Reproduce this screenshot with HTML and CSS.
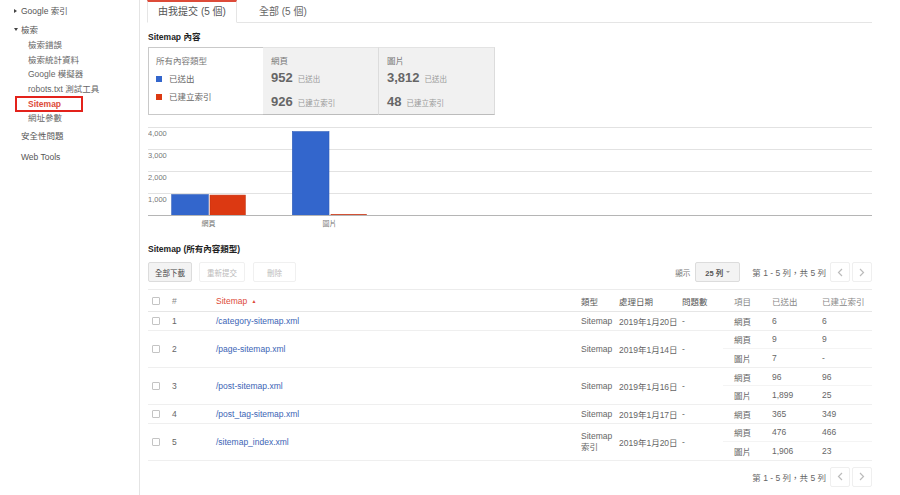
FILE: index.html
```html
<!DOCTYPE html>
<html lang="zh-Hant">
<head>
<meta charset="utf-8">
<title>Sitemap</title>
<link rel="stylesheet" href="styles.css">
</head>
<body>
<div class="page">
  <nav class="sidebar">
    <div class="nav-item nav-top"><span class="tri tri-right"></span>Google 索引</div>
    <div class="nav-item nav-top nav-open"><span class="tri tri-down"></span>檢索</div>
    <div class="nav-sub">檢索錯誤</div>
    <div class="nav-sub">檢索統計資料</div>
    <div class="nav-sub">Google 模擬器</div>
    <div class="nav-sub">robots.txt 測試工具</div>
    <div class="nav-sub nav-active">Sitemap</div>
    <div class="nav-sub">網址參數</div>
    <div class="nav-item nav-plain nav-sec">安全性問題</div>
    <div class="nav-item nav-plain nav-web">Web Tools</div>
  </nav>

  <main class="main">
    <div class="tabs">
      <div class="tab tab-active">由我提交 (5 個)</div>
      <div class="tab">全部 (5 個)</div>
    </div>

    <div class="section-title title-content">Sitemap 內容</div>

    <div class="type-boxes">
      <div class="type-box type-box-all">
        <div class="box-label">所有內容類型</div>
        <div class="legend"><span class="swatch swatch-blue"></span>已送出</div>
        <div class="legend"><span class="swatch swatch-red"></span>已建立索引</div>
      </div>
      <div class="type-box type-box-gray">
        <div class="box-label">網頁</div>
        <div class="stat stat-first"><span class="stat-num">952</span><span class="stat-label">已送出</span></div>
        <div class="stat"><span class="stat-num">926</span><span class="stat-label">已建立索引</span></div>
      </div>
      <div class="type-box type-box-gray">
        <div class="box-label">圖片</div>
        <div class="stat stat-first"><span class="stat-num">3,812</span><span class="stat-label">已送出</span></div>
        <div class="stat"><span class="stat-num">48</span><span class="stat-label">已建立索引</span></div>
      </div>
    </div>

    <svg class="chart" width="724" height="110" viewBox="0 0 724 110">
      <g class="grid">
        <line x1="0" y1="7.5" x2="724" y2="7.5"/>
        <line x1="0" y1="29.5" x2="724" y2="29.5"/>
        <line x1="0" y1="51.5" x2="724" y2="51.5"/>
        <line x1="0" y1="73.5" x2="724" y2="73.5"/>
      </g>
      <g class="axis-labels">
        <text x="0" y="15.5">4,000</text>
        <text x="0" y="37.5">3,000</text>
        <text x="0" y="59.5">2,000</text>
        <text x="0" y="81.5">1,000</text>
      </g>
      <rect class="bar-blue" x="23.7" y="74.6" width="36.6" height="20.9"/>
      <rect class="bar-red" x="62" y="75.1" width="35.3" height="20.4"/>
      <rect class="bar-blue" x="144.3" y="11.6" width="36.7" height="83.9"/>
      <rect class="bar-red" x="183" y="94.4" width="35.3" height="1.1"/>
      <line class="baseline" x1="0" y1="95.5" x2="724" y2="95.5"/>
      <g class="cat-labels">
        <text x="60.5" y="106">網頁</text>
        <text x="181.5" y="106">圖片</text>
      </g>
    </svg>

    <div class="section-title title-list">Sitemap (所有內容類型)</div>

    <div class="toolbar">
      <button class="btn">全部下載</button>
      <button class="btn btn-disabled btn-resubmit">重新提交</button>
      <button class="btn btn-disabled btn-delete">刪除</button>
      <div class="spacer"></div>
      <span class="show-label">顯示</span>
      <button class="btn btn-select">25 列 <span class="caret"></span></button>
      <span class="pager-text">第 1 - 5 列，共 5 列</span>
      <button class="arrow arrow-prev"><svg width="6" height="9" viewBox="0 0 6 9"><path d="M5 1L1.5 4.5L5 8" fill="none" stroke="#bbb" stroke-width="1.2"/></svg></button>
      <button class="arrow"><svg width="6" height="9" viewBox="0 0 6 9"><path d="M1 1L4.5 4.5L1 8" fill="none" stroke="#bbb" stroke-width="1.2"/></svg></button>
    </div>

    <div class="sitemaps" role="table">
      <div class="trow thead" role="row">
        <div class="cell cb-cell"><span class="checkbox"></span></div>
        <div class="cell">#</div>
        <div class="cell sorted">Sitemap <span class="sort-arrow">▲</span></div>
        <div class="cell dark">類型</div>
        <div class="cell dark">處理日期</div>
        <div class="cell dark">問題數</div>
        <div class="cell item-head">項目</div>
        <div class="cell">已送出</div>
        <div class="cell">已建立索引</div>
      </div>

      <div class="trow" role="row">
        <div class="cell cb-cell"><span class="checkbox"></span></div>
        <div class="cell">1</div>
        <div class="cell"><a class="link">/category-sitemap.xml</a></div>
        <div class="cell">Sitemap</div>
        <div class="cell">2019年1月20日</div>
        <div class="cell">-</div>
        <div class="items">
          <div class="sub"><span class="sub-item">網頁</span><span>6</span><span>6</span></div>
        </div>
      </div>

      <div class="trow" role="row">
        <div class="cell cb-cell"><span class="checkbox"></span></div>
        <div class="cell">2</div>
        <div class="cell"><a class="link">/page-sitemap.xml</a></div>
        <div class="cell">Sitemap</div>
        <div class="cell">2019年1月14日</div>
        <div class="cell">-</div>
        <div class="items">
          <div class="sub"><span class="sub-item">網頁</span><span>9</span><span>9</span></div>
          <div class="sub"><span class="sub-item">圖片</span><span>7</span><span>-</span></div>
        </div>
      </div>

      <div class="trow" role="row">
        <div class="cell cb-cell"><span class="checkbox"></span></div>
        <div class="cell">3</div>
        <div class="cell"><a class="link">/post-sitemap.xml</a></div>
        <div class="cell">Sitemap</div>
        <div class="cell">2019年1月16日</div>
        <div class="cell">-</div>
        <div class="items">
          <div class="sub"><span class="sub-item">網頁</span><span>96</span><span>96</span></div>
          <div class="sub"><span class="sub-item">圖片</span><span>1,899</span><span>25</span></div>
        </div>
      </div>

      <div class="trow" role="row">
        <div class="cell cb-cell"><span class="checkbox"></span></div>
        <div class="cell">4</div>
        <div class="cell"><a class="link">/post_tag-sitemap.xml</a></div>
        <div class="cell">Sitemap</div>
        <div class="cell">2019年1月17日</div>
        <div class="cell">-</div>
        <div class="items">
          <div class="sub"><span class="sub-item">網頁</span><span>365</span><span>349</span></div>
        </div>
      </div>

      <div class="trow" role="row">
        <div class="cell cb-cell"><span class="checkbox"></span></div>
        <div class="cell">5</div>
        <div class="cell"><a class="link">/sitemap_index.xml</a></div>
        <div class="cell two-line">Sitemap<br>索引</div>
        <div class="cell">2019年1月20日</div>
        <div class="cell">-</div>
        <div class="items">
          <div class="sub"><span class="sub-item">網頁</span><span>476</span><span>466</span></div>
          <div class="sub"><span class="sub-item">圖片</span><span>1,906</span><span>23</span></div>
        </div>
      </div>
    </div>

    <div class="footer-pager">
      <span class="pager-text">第 1 - 5 列，共 5 列</span>
      <button class="arrow arrow-prev"><svg width="6" height="9" viewBox="0 0 6 9"><path d="M5 1L1.5 4.5L5 8" fill="none" stroke="#bbb" stroke-width="1.2"/></svg></button>
      <button class="arrow"><svg width="6" height="9" viewBox="0 0 6 9"><path d="M1 1L4.5 4.5L1 8" fill="none" stroke="#bbb" stroke-width="1.2"/></svg></button>
    </div>
  </main>
</div>
</body>
</html>
```

FILE: styles.css
```css
* { box-sizing: border-box; }

body {
  margin: 0;
  background: #fff;
  color: #555;
  font-family: "Liberation Sans", "Noto Sans CJK TC", sans-serif;
  font-size: 8.5px;
}

.page {
  display: flex;
  width: 900px;
  height: 495px;
  overflow: hidden;
}

/* ---------- sidebar ---------- */
.sidebar {
  width: 140px;
  flex-shrink: 0;
  border-right: 1px solid #e4e4e4;
  padding-top: 4px;
}

.nav-item {
  line-height: 15px;
  color: #555;
  white-space: nowrap;
}

.nav-top {
  padding-left: 14px;
}

.nav-open {
  margin-top: 4px;
}

.tri {
  display: inline-block;
  vertical-align: middle;
  margin-right: 4px;
  position: relative;
  top: -1px;
}

.tri-right {
  border-left: 3px solid #444;
  border-top: 2.5px solid transparent;
  border-bottom: 2.5px solid transparent;
}

.tri-down {
  border-top: 3px solid #444;
  border-left: 2.5px solid transparent;
  border-right: 2.5px solid transparent;
  margin-right: 3px;
}

.nav-sub {
  line-height: 14.6px;
  padding-left: 28px;
  color: #666;
  white-space: nowrap;
}

.nav-active {
  margin-left: 15px;
  padding-left: 11px;
  width: 68px;
  height: 16px;
  line-height: 12px;
  border: 2px solid #e3221b;
  color: #dd4b39;
  font-weight: bold;
  margin-top: -0.5px;
  margin-bottom: -1px;
}

.nav-plain {
  padding-left: 21px;
}

.nav-sec {
  margin-top: 4px;
}

.nav-web {
  margin-top: 6px;
}

/* ---------- main ---------- */
.main {
  flex: 1;
  padding: 0 28px 0 7px;
  min-width: 0;
}

.tabs {
  display: flex;
  height: 23px;
  border-bottom: 1px solid #e5e5e5;
}

.tab {
  font-size: 10px;
  line-height: 20px;
  color: #666;
  padding: 0 0 0 22px;
  margin-top: 2px;
}

.tab-active {
  width: 90px;
  height: 23px;
  margin-top: 0;
  padding: 0;
  text-align: center;
  color: #555;
  background: #fff;
  border: 1px solid #e5e5e5;
  border-top: 2px solid #dd4b39;
  border-bottom: 1px solid #fff;
}

.section-title {
  font-weight: bold;
  color: #222;
  line-height: 10px;
  padding-left: 1px;
}

.title-content {
  margin-top: 9px;
}

.title-list {
  margin-top: 14px;
}

/* ---------- content type boxes ---------- */
.type-boxes {
  display: flex;
  margin-top: 5px;
  margin-left: 1px;
  height: 68px;
}

.type-box {
  width: 116px;
  height: 68px;
  padding: 8px 7px 0 7px;
}

.type-box-all {
  width: 115px;
  background: #fff;
  border: 1px solid #c9c9c9;
  border-right: none;
}

.type-box-gray {
  background: #f1f1f1;
  border-top: 1px solid #e3e3e3;
  border-right: 1px solid #dcdcdc;
  border-bottom: 1px solid #bcbcbc;
  padding-left: 8px;
}

.box-label {
  line-height: 10px;
  color: #777;
}

.legend {
  margin-top: 8px;
  line-height: 10px;
  color: #666;
  display: flex;
  align-items: center;
}

.swatch {
  width: 6px;
  height: 6px;
  margin-right: 7px;
}

.swatch-blue { background: #3366cc; }
.swatch-red { background: #dc3912; }

.stat {
  margin-top: 6px;
  line-height: 16px;
  white-space: nowrap;
}

.stat-first {
  margin-top: 4px;
}

.stat-num {
  font-size: 13px;
  font-weight: bold;
  color: #666;
  margin-right: 5px;
}

.stat-label {
  font-size: 7.5px;
  color: #999;
}

/* ---------- chart ---------- */
.chart {
  display: block;
  margin-top: 5px;
  margin-left: 1px;
}

.grid line {
  stroke: #e2e2e2;
  stroke-width: 1;
}

.baseline {
  stroke: #b5b5b5;
  stroke-width: 1;
}

.axis-labels text {
  font-family: "Liberation Sans", sans-serif;
  font-size: 7.5px;
  fill: #777;
}

.cat-labels text {
  font-family: "Liberation Sans", "Noto Sans CJK TC", sans-serif;
  font-size: 7px;
  fill: #777;
  text-anchor: middle;
}

.bar-blue {
  fill: #3366cc;
  stroke: #2f5cb8;
  stroke-width: 0.6;
}

.bar-red {
  fill: #dc3912;
  stroke: #c2310f;
  stroke-width: 0.6;
}

/* ---------- toolbar ---------- */
.toolbar {
  display: flex;
  align-items: center;
  margin-top: 8px;
  margin-left: 1px;
  height: 20px;
}

.btn {
  font-family: inherit;
  font-size: 7.5px;
  height: 20px;
  min-width: 43px;
  padding: 0 6px;
  color: #444;
  background: #f3f3f3;
  border: 1px solid #dcdcdc;
  border-radius: 2px;
}

.btn-disabled {
  color: #bbb;
  background: #fff;
  border-color: #f0f0f0;
}

.btn-resubmit {
  margin-left: 7px;
  width: 46px;
}

.btn-delete {
  margin-left: 8px;
}

.spacer {
  flex: 1;
}

.show-label {
  font-size: 7.5px;
  color: #777;
  margin-right: 5px;
}

.btn-select {
  width: 45px;
  color: #555;
  font-weight: bold;
  display: flex;
  align-items: center;
  justify-content: center;
  gap: 3px;
}

.caret {
  border-top: 2.5px solid #999;
  border-left: 2px solid transparent;
  border-right: 2px solid transparent;
}

.pager-text {
  margin-left: 12px;
  color: #666;
  white-space: nowrap;
}

.arrow {
  width: 20px;
  height: 20px;
  margin-left: 4px;
  padding: 0;
  background: #fff;
  border: 1px solid #efefef;
  border-radius: 2px;
  display: flex;
  align-items: center;
  justify-content: center;
}

.arrow + .arrow {
  margin-left: 2px;
}

/* ---------- table ---------- */
.sitemaps {
  width: 724px;
  margin-top: 7px;
  margin-left: 1px;
}

.trow {
  display: grid;
  grid-template-columns: 21px 44px 365px 38px 63px 44px 149px;
  align-items: center;
  border-bottom: 1px solid #efefef;
  color: #666;
}

.trow.thead {
  grid-template-columns: 21px 44px 365px 38px 63px 44px 46px 50px 53px;
  height: 23px;
  border-top: 1px solid #ececec;
  border-bottom-color: #e6e6e6;
  color: #888;
}

.cell {
  padding-left: 3px;
  white-space: nowrap;
}

.thead .dark {
  color: #555;
}

.thead .sorted {
  color: #dd4b39;
}

.thead .item-head {
  padding-left: 11px;
}

.sort-arrow {
  font-size: 5px;
  position: relative;
  top: -1px;
  margin-left: 2px;
}

.cb-cell {
  padding-left: 4px;
}

.sub {
  display: grid;
  grid-template-columns: 46px 50px 53px;
  align-items: center;
  height: 17.6px;
}

.sub + .sub {
  height: 18.6px;
  border-top: 1px solid #f4f4f4;
}

.sub span {
  padding-left: 3px;
}

.sub .sub-item {
  padding-left: 11px;
}

.two-line {
  line-height: 11px;
}

.checkbox {
  display: block;
  width: 8px;
  height: 8px;
  border: 1px solid #c4c4c4;
  border-radius: 1px;
  background: #fff;
}

.link {
  color: #3b64b5;
  text-decoration: none;
}

/* ---------- footer pager ---------- */
.footer-pager {
  display: flex;
  justify-content: flex-end;
  align-items: center;
  margin-top: 6px;
  height: 20px;
}
```
